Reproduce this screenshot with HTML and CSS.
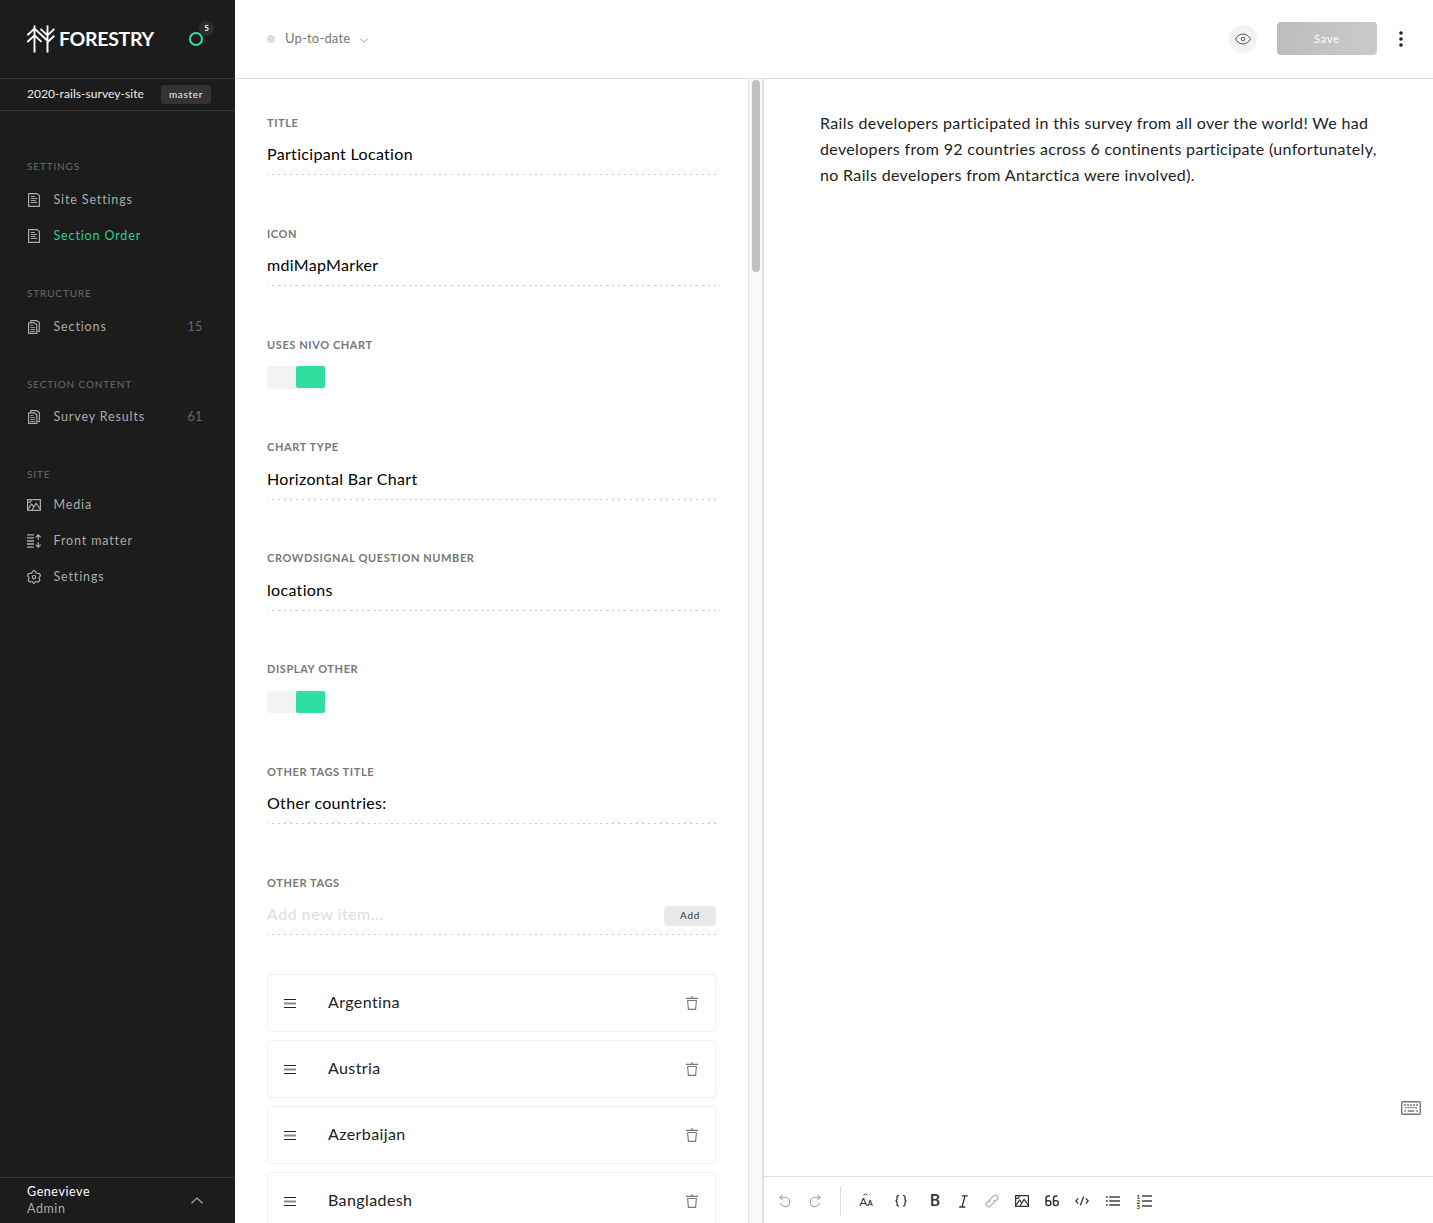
FILE: index.html
```html
<!DOCTYPE html>
<html lang="en">
<head>
<meta charset="utf-8">
<title>Forestry</title>
<link rel="stylesheet" href="styles.css">
</head>
<body>
<svg class="defs" width="0" height="0">
  <symbol id="doc" viewBox="0 0 14 14"><path d="M1.6.6h8.600l2.200 2v10.800H1.600z" fill="none" stroke="currentColor" stroke-width="1.2" stroke-linejoin="round"/><path d="M3.800 3.500h4M3.800 5.500h6.400M3.800 7.500h5M3.800 9.500h6.400" stroke="currentColor"/></symbol>
  <symbol id="docs" viewBox="0 0 14 14"><path d="M3.800 2.400V.6h5.700l2.800 2v8.900h-2" fill="none" stroke="currentColor" stroke-width="1.2" stroke-linejoin="round"/><path d="M1.600 2.800h5.800l2.400 2v8.600H1.600z" fill="none" stroke="currentColor" stroke-width="1.2" stroke-linejoin="round"/><path d="M3.400 5.500h3M3.400 7.500h4.700M3.400 9.500h4.700M3.400 11.500h4.700" stroke="currentColor" stroke-width=".9"/></symbol>
  <symbol id="image" viewBox="0 0 14 14"><path d="M.6 1.600h12.800v10.800H.6z" fill="none" stroke="currentColor" stroke-width="1.300"/><path d="M1 11.200 4.600 6l2 2.600M5 12l4.100-6.600 4 5.600M1.200 4.400c2 .3 2.800-.6 2.900-2.400" fill="none" stroke="currentColor" stroke-width="1.200"/></symbol>
  <symbol id="trash" viewBox="0 0 12 14"><path d="M0 2.400h12M4.800 1h2.400" fill="none" stroke="currentColor" stroke-width="1.100"/><path d="M1.300 4.500h9.400M1.600 4.500l.8 8.900h7.200l.8-8.900" fill="none" stroke="currentColor" stroke-width="1.100"/></symbol>
  <symbol id="grip" viewBox="0 0 12 9"><path d="M0 .5h12M0 8.500h12" stroke="#222"/><path d="M0 4.500h12" stroke="#888" stroke-width="2"/></symbol>
</svg>
<div class="app">
  <aside class="sidebar">
    <div class="brand">
      <svg class="logo" width="28" height="28" viewBox="0 0 28 28" fill="none" stroke="#fff" stroke-width="1.900"><path d="M7.500.5v27M.4 10.200l7.100-6.600 13 12.200M.4 17l7.100-6.700 7 6.600M20.500.5v27M27.300 3.900l-6.800 6.500-7-6.500M27.300 10.800l-6.800 6.400"/></svg>
      <span class="wordmark">FORESTRY</span>
      <span class="notify"><span class="badge">5</span></span>
    </div>
    <div class="site"><span class="site-name">2020-rails-survey-site</span><span class="branch">master</span></div>
    <nav class="nav">
      <section class="group"><h2>SETTINGS</h2>
        <a class="item"><svg class="ico"><use href="#doc"/></svg><span>Site Settings</span></a>
        <a class="item active"><svg class="ico"><use href="#doc"/></svg><span>Section Order</span></a>
      </section>
      <section class="group"><h2>STRUCTURE</h2>
        <a class="item"><svg class="ico"><use href="#docs"/></svg><span>Sections</span><span class="count">15</span></a>
      </section>
      <section class="group content"><h2>SECTION CONTENT</h2>
        <a class="item"><svg class="ico"><use href="#docs"/></svg><span>Survey Results</span><span class="count">61</span></a>
      </section>
      <section class="group manage"><h2>SITE</h2>
        <a class="item"><svg class="ico"><use href="#image"/></svg><span>Media</span></a>
        <a class="item"><svg class="ico" viewBox="0 0 14 14" fill="none" stroke="currentColor"><path d="M0 .9h7M0 3.900h7M0 7h7M0 10h7M0 13.100h7" stroke-width="1.300"/><path d="M11.200 5.800V1M8.800 3.300 11.200.8l2.400 2.500M11.200 8.200V13M8.800 10.700l2.400 2.500 2.400-2.500" stroke-width="1.200"/></svg><span>Front matter</span></a>
        <a class="item"><svg class="ico" viewBox="0 0 14 14" fill="none" stroke="currentColor" stroke-width="1.200"><path d="M5.200 2.200C5.600.2 8.400.2 8.800 2.200c.1.900 1 1.500 1.900 1.200 2-.5 3.500 1.900 2 3.300-.8.600-.8 1.400-.3 2.200 1 1.800-.8 3.600-2.700 2.800-.8-.4-1.300-.2-1.600.5-.6 1.500-1.600 1.500-2.200 0-.3-.7-.8-.9-1.600-.5-1.900.8-3.700-1-2.700-2.800.5-.8.500-1.600-.3-2.200-1.500-1.400 0-3.800 2-3.300.9.300 1.800-.3 1.900-1.200z"/><circle cx="7" cy="7.200" r="1.700"/></svg><span>Settings</span></a>
      </section>
    </nav>
    <div class="user"><div><div class="user-name">Genevieve</div><div class="user-role">Admin</div></div>
      <svg width="12" height="7" viewBox="0 0 12 7" fill="none" stroke="#aaa" stroke-width="1.200"><path d="M.5 6.200 6 1l5.500 5.200"/></svg></div>
  </aside>
  <main class="main">
    <header class="topbar">
      <span class="dot"></span><span class="status">Up-to-date</span>
      <svg class="caret" width="8" height="5" viewBox="0 0 8 5" fill="none" stroke="#888" stroke-width=".8"><path d="M.3.5 4 4.200 7.700.5"/></svg>
      <span class="preview"><svg width="16" height="12" viewBox="0 0 16 12" fill="none" stroke="#444" stroke-width=".9"><path d="M.5 6C4-.6 12-.6 15.500 6 12 12.600 4 12.600.5 6z"/><circle cx="8" cy="6" r="1.800"/></svg></span>
      <button class="save">Save</button>
      <svg class="more" width="4" height="16" viewBox="0 0 4 16" fill="#222"><circle cx="2" cy="2" r="1.800"/><circle cx="2" cy="8" r="1.800"/><circle cx="2" cy="14" r="1.800"/></svg>
    </header>
    <div class="panes">
      <form class="form">
        <div class="field"><label>TITLE</label><div class="value">Participant Location</div></div>
        <div class="field"><label>ICON</label><div class="value">mdiMapMarker</div></div>
        <div class="field"><label>USES NIVO CHART</label><div class="toggle"><i></i></div></div>
        <div class="field snug"><label>CHART TYPE</label><div class="value">Horizontal Bar Chart</div></div>
        <div class="field snug"><label>CROWDSIGNAL QUESTION NUMBER</label><div class="value">locations</div></div>
        <div class="field snug"><label>DISPLAY OTHER</label><div class="toggle"><i></i></div></div>
        <div class="field"><label>OTHER TAGS TITLE</label><div class="value">Other countries:</div></div>
        <div class="field tags"><label>OTHER TAGS</label><div class="value placeholder"><span>Add new item...</span><span class="add">Add</span></div></div>
        <div class="tag"><svg class="grip"><use href="#grip"/></svg><span>Argentina</span><svg class="trash"><use href="#trash"/></svg></div>
        <div class="tag"><svg class="grip"><use href="#grip"/></svg><span>Austria</span><svg class="trash"><use href="#trash"/></svg></div>
        <div class="tag"><svg class="grip"><use href="#grip"/></svg><span>Azerbaijan</span><svg class="trash"><use href="#trash"/></svg></div>
        <div class="tag"><svg class="grip"><use href="#grip"/></svg><span>Bangladesh</span><svg class="trash"><use href="#trash"/></svg></div>
      </form>
      <div class="track"><div class="thumb"></div></div>
      <div class="editor">
        <div class="document"><p>Rails developers participated in this survey from all over the world! We had<br>developers from 92 countries across 6 continents participate (unfortunately,<br>no Rails developers from Antarctica were involved).</p>
          <svg class="keyboard" width="20" height="14" viewBox="0 0 20 14" fill="none" stroke="#777"><rect x=".7" y=".7" width="18.600" height="12.600" rx="1.300" stroke-width="1.400"/><path d="M3 4h14" stroke-width="1.500" stroke-dasharray="2 1"/><path d="M4 6.700h12" stroke-width="1.300" stroke-dasharray="1.800 .75"/><path d="M3.200 10h1.600M6.800 10h6.400M15.200 10h1.600" stroke-width="1.500"/></svg>
        </div>
        <div class="toolbar">
          <svg class="muted" width="12" height="14" viewBox="0 0 12 14"><path d="M1 3.500h5.500a4.600 4.600 0 1 1-4.900 5.200M3.600.8 1 3.500l2.700 2.700"/></svg>
          <svg class="muted" width="12" height="14" viewBox="0 0 12 14"><path d="M11 3.500H5.500a4.600 4.600 0 1 0 4.900 5.200M8.400.8 11 3.500 8.300 6.200"/></svg>
          <span class="divider"></span>
          <span class="heading"><svg width="5" height="3" viewBox="0 0 5 3"><path d="M.5 2.300 2.500.7l2 1.600"/></svg>A<small>A</small></span>
          <svg width="12" height="12" viewBox="0 0 12 12" class="strong"><path d="M4 .7H3.300Q2 .7 2 2v2.300Q2 5.600.5 5.800 2 6 2 7.300v2.300q0 1.300 1.300 1.300H4M8 .7h.7Q10 .7 10 2v2.300q0 1.300 1.500 1.500Q10 6 10 7.300v2.300q0 1.300-1.300 1.300H8"/></svg>
          <span class="bold">B</span>
          <svg width="9" height="13" viewBox="0 0 9 13" class="strong"><path d="M2.800.8h6M.2 12h6M5.900.8 3.100 12"/></svg>
          <svg class="muted" width="14" height="14" viewBox="0 0 14 14"><path d="M5.600 8.400a2.500 2.500 0 0 1 0-3.500L8.900 1.600a2.500 2.500 0 0 1 3.500 3.500L9.800 7.700M8.400 5.600a2.500 2.500 0 0 1 0 3.500l-3.300 3.300a2.500 2.500 0 0 1-3.500-3.500l2.600-2.600"/></svg>
          <svg class="solid" width="14" height="14"><use href="#image"/></svg>
          <svg width="14" height="12" viewBox="0 0 14 12" class="quote"><path d="M5 .9H3.500Q1 .9 1 3.500v5Q1 10.500 3 10.500h.8q2 0 2-2v-.8q0-2-2-2H1M12.500.9H11Q8.500.9 8.500 3.500v5q0 2 2 2h.8q2 0 2-2v-.8q0-2-2-2H8.500"/></svg>
          <svg width="14" height="10" viewBox="0 0 14 10" class="strong"><path d="M3.200 2.400.8 5l2.400 2.600M10.800 2.400 13.200 5l-2.400 2.600M8.700.4 5.300 9.600"/></svg>
          <svg width="14" height="10" viewBox="0 0 14 10" stroke="#444" stroke-width="1.500"><path d="M0 .9h1.800M0 5h1.800M0 9.100h1.800M3.200.9H14M3.200 5H14M3.200 9.100H14"/></svg>
          <span class="ordered"><span class="nums"><b>1</b><b>2</b><b>3</b></span><svg width="10" height="12" viewBox="0 0 10 12" stroke="#444" stroke-width="1.500"><path d="M0 1h10M0 6h10M0 11h10"/></svg></span>
        </div>
      </div>
    </div>
  </main>
</div>
</body>
</html>
```
FILE: styles.css
```css
* { box-sizing: border-box; }
body { margin: 0; font-family: Lato, "Open Sans", sans-serif; font-variant-ligatures: none; background: #fff; color: #222; overflow: hidden; }
svg { display: block; flex: none; }
.defs { position: absolute; }
.app { display: grid; grid-template-columns: 235px 1fr; height: 1223px; overflow: hidden; }

.sidebar { background: #1c1c1c; color: #aaa; display: flex; flex-direction: column; min-height: 0; }
.brand { height: 79px; border-bottom: 1px solid #333; display: flex; align-items: center; padding: 0 32px 0 27px; }
.wordmark { margin-left: 4px; font-size: 19.5px; font-weight: 700; letter-spacing: -.3px; color: #fff; line-height: 24px; }
.notify { margin-left: auto; width: 14px; height: 14px; border: 2px solid #30dfa0; border-radius: 50%; position: relative; }
.badge { position: absolute; left: 8px; top: -13px; width: 15px; height: 15px; border-radius: 50%; background: #2e2e2e; color: #fff; font-size: 8px; font-weight: 700; line-height: 15px; text-align: center; }
.site { height: 32px; border-bottom: 1px solid #333; display: flex; align-items: center; justify-content: space-between; padding: 0 24px 0 27px; }
.site-name { font-size: 12px; letter-spacing: .06px; color: #eee; padding-bottom: 2px; }
.branch { width: 50px; height: 19px; border-radius: 4px; background: #333; color: #eee; font-size: 10px; letter-spacing: .7px; line-height: 19px; text-align: center; }
.nav { padding: 47px 33px 0 27px; flex: 1; }
.group { margin-bottom: 31px; }
.group h2 { margin: 0 0 8px; font-size: 10px; font-weight: 400; letter-spacing: .86px; line-height: 16px; color: #6a6a6a; white-space: nowrap; }
.content h2 { margin-bottom: 7px; }
.manage h2 { margin-bottom: 5px; }
.item { display: flex; align-items: center; height: 36px; font-size: 12.5px; letter-spacing: .86px; color: #aaa; }
.item span { padding-bottom: 2px; }
.item.active span { color: #2bcf92; }
.ico { width: 14px; height: 14px; margin-right: 12.5px; color: #aaa; }
.item .count { margin-left: auto; margin-right: -.5px; letter-spacing: .3px; color: #666; }
.user { height: 46px; border-top: 1px solid #333; display: flex; align-items: center; justify-content: space-between; padding: 0 32px 0 27px; font-size: 12.5px; letter-spacing: .58px; line-height: 17px; }
.user > div { padding-bottom: 2px; }
.user-name { color: #fff; }

.main { display: flex; flex-direction: column; min-width: 0; min-height: 0; }
.topbar { height: 79px; border-bottom: 1px solid #ddd; display: flex; align-items: center; padding: 0 30px 0 32px; }
.dot { width: 8px; height: 8px; border-radius: 50%; background: #ddd; margin-right: 10px; }
.status { font-size: 13px; letter-spacing: .18px; color: #777; margin-right: 10px; padding-bottom: 2px; width: 65px; white-space: nowrap; }
.caret { margin-top: 2px; }
.preview { margin-left: auto; width: 28px; height: 28px; border-radius: 50%; background: #f2f2f2; display: grid; place-items: center; }
.save { margin: 0 22px 1px 20px; width: 100px; height: 33px; border: 0; border-radius: 4px; background: linear-gradient(100deg, #bdbdbd, #cacaca); color: #fff; font-family: inherit; font-size: 11px; letter-spacing: .9px; padding: 0 0 1px; }

.panes { flex: 1; min-height: 0; display: grid; grid-template-columns: 513px 16px 1fr; }
.form { padding: 36px 32px 0; overflow: hidden; }
.field { margin-bottom: 51px; }
.field label { display: block; height: 16px; line-height: 15.6px; font-size: 11px; font-weight: 700; letter-spacing: .6px; color: #777; }
.snug label { line-height: 14px; }
.value { height: 44px; padding-top: 10px; font-size: 16px; letter-spacing: .32px; line-height: 26px; color: #000; background: repeating-linear-gradient(90deg, #ccc 0 1px, transparent 1px 4.973px, #ccc 4.973px 5.973px) 0 100% / 100% 1px no-repeat; }
.toggle { margin-top: 13px; width: 58px; height: 22.5px; background: #f2f2f2; border-radius: 2px; display: flex; justify-content: flex-end; }
.toggle i { width: 29px; height: 22px; border-radius: 2px; background: #30dfa0; }
.tags { margin-bottom: 39px; }
.placeholder { display: flex; justify-content: space-between; color: #ddd; letter-spacing: .53px; }
.add { margin-top: 5px; width: 52px; height: 20px; border-radius: 4px; background: #e9e9e9; color: #333; font-size: 10px; letter-spacing: .7px; line-height: 19px; text-align: center; }
.tag { height: 58px; margin-bottom: 8px; border: 1px solid #f0f0f0; border-radius: 3px; display: flex; align-items: center; padding: 0 17px 0 16px; font-size: 16px; letter-spacing: .4px; color: #222; }
.tag span { padding-bottom: 3px; }
.grip { width: 12px; height: 9px; margin-right: 32px; }
.trash { width: 12px; height: 14px; margin-left: auto; color: #777; }
.track { background: #fafafa; border-left: 1px solid #e4e4e4; border-right: 1px solid #ddd; box-shadow: inset -1px 0 #e8e8e8; padding: 1px 0 0 3px; }
.thumb { width: 8px; height: 192px; border-radius: 4px; background: #c1c1c1; }

.editor { display: flex; flex-direction: column; min-width: 0; min-height: 0; }
.document { flex: 1; padding: 31px 12px 61px 56px; display: flex; flex-direction: column; justify-content: space-between; }
.document p { margin: 0; font-size: 16px; letter-spacing: .34px; line-height: 26px; color: #222; white-space: nowrap; }
.keyboard { align-self: flex-end; }
.toolbar { height: 47px; border-top: 1px solid #ddd; padding: 2px 0 0 6px; display: grid; grid-template-columns: 30px 30px 21px 30px 40px 28px 28px 30px 30px 30px 30px 32px 32px; place-items: center; fill: none; }
.muted { stroke: #aaa; stroke-width: 1.2; }
.strong { stroke: #333; stroke-width: 1.3; }
.quote { stroke: #333; stroke-width: 1.5; }
.solid { color: #333; }
.divider { width: 1px; height: 30px; background: #ddd; }
.heading { position: relative; font-size: 12px; line-height: 14px; color: #333; padding-top: 3px; }
.heading small { font-size: 7.5px; font-weight: 700; }
.heading svg { position: absolute; left: 4px; top: 1px; stroke: #333; stroke-width: .9; }
.bold { font-family: Roboto, sans-serif; font-size: 16px; font-weight: 500; line-height: 16px; color: #333; }
.ordered { display: flex; align-items: center; gap: 1px; margin-right: 2px; }
.nums { display: flex; flex-direction: column; font-size: 6px; line-height: 5px; width: 4px; color: #333; }
```
